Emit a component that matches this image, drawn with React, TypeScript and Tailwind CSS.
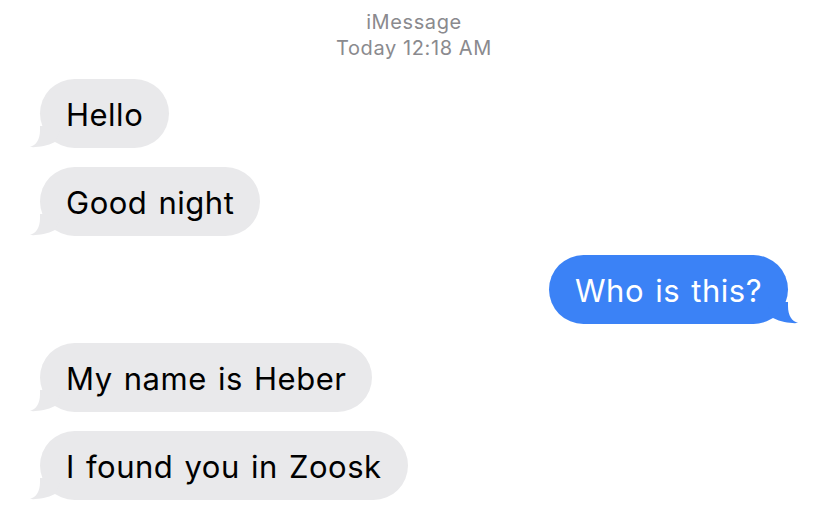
const Tail = ({ color, side }: { color: string; side: "left" | "right" }) => (
  <svg
    className={
      side === "left"
        ? "absolute left-[-10px] bottom-0"
        : "absolute right-[-10px] bottom-0 scale-x-[-1]"
    }
    width="30"
    height="22"
    viewBox="-10 48 30 22"
  >
    <path
      d="M0 48 L0 52 C0 62 -4 67 -10 69 C-4 69.6 6 68.5 15 64 L22 48 Z"
      fill={color}
    />
  </svg>
);

const Bubble = ({ text, mine }: { text: string; mine?: boolean }) => (
  <div className={mine ? "flex justify-end" : "flex justify-start"}>
    <div
      className={
        mine
          ? "relative h-[69px] rounded-[35px] px-[26px] pt-[4px] flex items-center bg-[#3b82f6] text-white"
          : "relative h-[69px] rounded-[35px] px-[26px] pt-[4px] flex items-center bg-[#e9e9eb] text-black"
      }
    >
      <Tail color={mine ? "#3b82f6" : "#e9e9eb"} side={mine ? "right" : "left"} />
      <span className="relative text-[31px] tracking-[0.5px] [word-spacing:2px]">{text}</span>
    </div>
  </div>
);

export default function App() {
  return (
    <div
      className="w-[828px] h-[519px] bg-white overflow-hidden px-[40px] pt-[8px]"
      style={{ fontFamily: "Inter, 'Noto Sans', sans-serif" }}
    >
      <div className="text-center text-[#8a8a8e] text-[20px] leading-[26px] tracking-[0.6px] pt-[1px]">
        <div>iMessage</div>
        <div>Today 12:18 AM</div>
      </div>
      <div className="mt-[18px] flex flex-col gap-[19px]">
        <Bubble text="Hello" />
        <Bubble text="Good night" />
        <Bubble text="Who is this?" mine />
        <Bubble text="My name is Heber" />
        <Bubble text="I found you in Zoosk" />
      </div>
    </div>
  );
}
